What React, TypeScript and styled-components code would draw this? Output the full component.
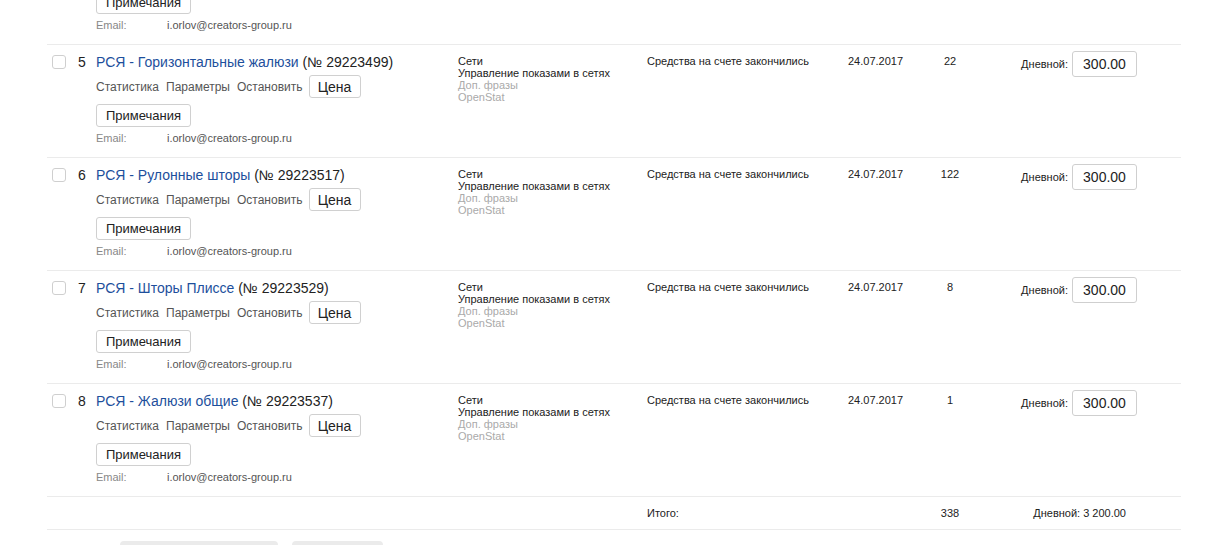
import { FC } from 'react';
import styled, { createGlobalStyle } from 'styled-components';

interface Campaign {
  num: number;
  name: string;
  id: string;
  clicks: string;
}

const campaigns: Campaign[] = [
  { num: 4, name: 'РСЯ - Вертикальные жалюзи', id: '29223481', clicks: '0' },
  { num: 5, name: 'РСЯ - Горизонтальные жалюзи', id: '29223499', clicks: '22' },
  { num: 6, name: 'РСЯ - Рулонные шторы', id: '29223517', clicks: '122' },
  { num: 7, name: 'РСЯ - Шторы Плиссе', id: '29223529', clicks: '8' },
  { num: 8, name: 'РСЯ - Жалюзи общие', id: '29223537', clicks: '1' },
];

const GlobalStyle = createGlobalStyle`
  html, body {
    margin: 0;
    padding: 0;
    background: #fff;
    overflow: hidden;
  }
  body {
    font-family: 'Liberation Sans', Arial, sans-serif;
    color: #222;
  }
`;

const CampaignRow: FC<{ campaign: Campaign }> = ({ campaign }) => (
  <Row>
    <Checkbox />
    <Num>{campaign.num}</Num>
    <TitleCell>
      <Title>
        <TitleLink>{campaign.name}</TitleLink> (№ {campaign.id})
      </Title>
      <Links>
        <Link>Статистика</Link>
        <Link>Параметры</Link>
        <Link>Остановить</Link>
        <PriceButton>Цена</PriceButton>
      </Links>
      <NotesButton>Примечания</NotesButton>
      <Email>
        <EmailLabel>Email:</EmailLabel>
        <span>i.orlov@creators-group.ru</span>
      </Email>
    </TitleCell>
    <Small>
      <div>Сети</div>
      <div>Управление показами в сетях</div>
      <Muted>Доп. фразы</Muted>
      <Muted>OpenStat</Muted>
    </Small>
    <Small>Средства на счете закончились</Small>
    <Small>24.07.2017</Small>
    <Count>{campaign.clicks}</Count>
    <Budget>
      <span>Дневной:</span>
      <BudgetInput>300.00</BudgetInput>
    </Budget>
  </Row>
);

const App: FC = () => (
  <>
    <GlobalStyle />
    <Page>
      <Table>
        {campaigns.map(c => (
          <CampaignRow key={c.num} campaign={c} />
        ))}
        <TotalRow>
          <TotalLabel>Итого:</TotalLabel>
          <TotalCount>338</TotalCount>
          <TotalBudget>Дневной: 3 200.00</TotalBudget>
        </TotalRow>
      </Table>
      <Footer>
        <GreyButton width={158} />
        <GreyButton width={91} />
      </Footer>
    </Page>
  </>
);

const Page = styled.div`
  width: 1209px;
  height: 545px;
  overflow: hidden;
`;

const Table = styled.div`
  margin: -69px 0 0 47px;
  width: 1134px;
`;

const Row = styled.div`
  display: grid;
  grid-template-columns: 26px 18px 362px 189px 201px 77px 50px 1fr;
  align-items: start;
  box-sizing: border-box;
  height: 113px;
  padding: 6px 44px 0 5px;
  border-top: 1px solid #ebebeb;
`;

const Checkbox = styled.div`
  width: 12px;
  height: 12px;
  margin-top: 4px;
  border: 1px solid #cfcfcf;
  border-radius: 3px;
  background: #fff;
`;

const Num = styled.div`
  margin-top: 3px;
  font-size: 14px;
  line-height: 16px;
  color: #222;
`;

const TitleCell = styled.div`
  display: flex;
  flex-direction: column;
  align-items: flex-start;
  margin-top: 3px;
`;

const Title = styled.div`
  font-size: 14px;
  line-height: 16px;
  color: #222;
  white-space: nowrap;
`;

const TitleLink = styled.span`
  color: #1d4f9c;
`;

const Links = styled.div`
  display: flex;
  align-items: center;
  gap: 7px;
  margin-top: 5px;
`;

const Link = styled.span`
  font-size: 12px;
  color: #555;
`;

const Button = styled.div`
  display: flex;
  align-items: center;
  justify-content: center;
  box-sizing: border-box;
  height: 23px;
  border: 1px solid #d0d0d0;
  border-radius: 3px;
  background: #fff;
  font-size: 14px;
  color: #222;
`;

const PriceButton = styled(Button)`
  width: 52px;
  margin-left: -1px;
`;

const NotesButton = styled(Button)`
  width: 95px;
  margin-top: 6px;
  font-size: 13px;
`;

const Email = styled.div`
  display: flex;
  margin-top: 5px;
  font-size: 11px;
  line-height: 13px;
  color: #555;
`;

const EmailLabel = styled.span`
  width: 71px;
  color: #888;
`;

const Small = styled.div`
  margin-top: 4px;
  font-size: 11px;
  line-height: 12px;
  color: #222;
  white-space: nowrap;
`;

const Muted = styled.div`
  color: #aaa;
`;

const Count = styled(Small)`
  text-align: center;
`;

const Budget = styled.div`
  display: flex;
  align-items: center;
  justify-content: flex-end;
  gap: 4px;
  font-size: 11px;
  color: #222;
`;

const BudgetInput = styled.div`
  display: flex;
  align-items: center;
  justify-content: center;
  box-sizing: border-box;
  width: 65px;
  height: 26px;
  border: 1px solid #cfcfcf;
  border-radius: 3px;
  font-size: 14px;
`;

const TotalRow = styled.div`
  display: grid;
  grid-template-columns: 26px 18px 362px 189px 201px 77px 50px 1fr;
  align-items: center;
  box-sizing: border-box;
  height: 34px;
  padding: 0 55px 0 5px;
  border-top: 1px solid #ebebeb;
  border-bottom: 1px solid #ebebeb;
`;

const TotalLabel = styled.div`
  grid-column: 5;
  font-size: 11px;
  color: #222;
`;

const TotalCount = styled(TotalLabel)`
  grid-column: 7;
  text-align: center;
`;

const TotalBudget = styled(TotalLabel)`
  grid-column: 8;
  text-align: right;
`;

const Footer = styled.div`
  display: flex;
  gap: 14px;
  margin: 11px 0 0 120px;
`;

const GreyButton = styled.div<{ width: number }>`
  width: ${({ width }) => width}px;
  height: 26px;
  border-radius: 4px;
  background: #ebebeb;
`;

export default App;
